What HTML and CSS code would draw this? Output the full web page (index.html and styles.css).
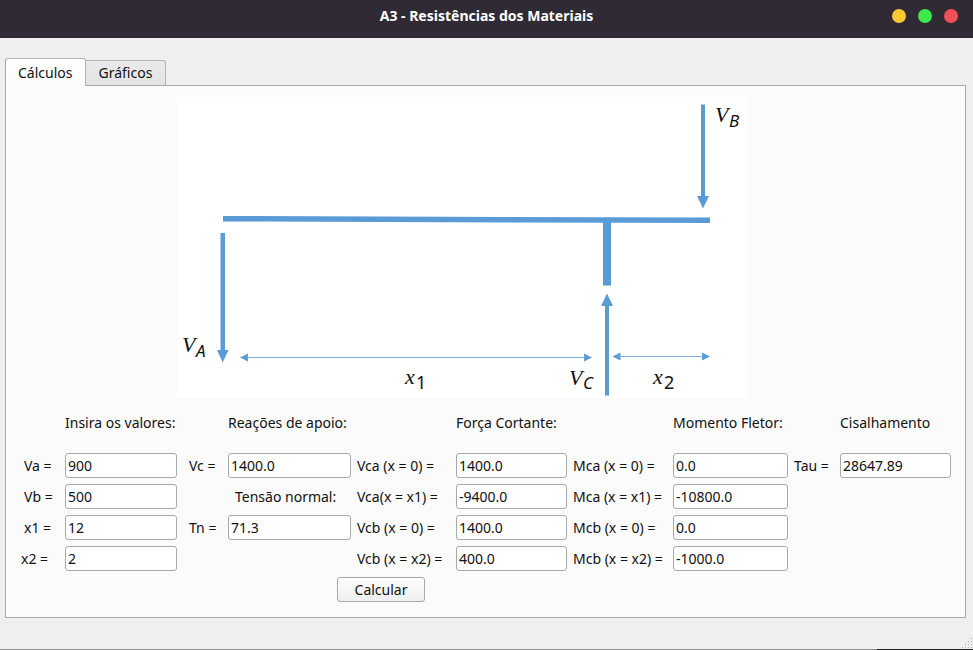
FILE: index.html
```html
<!DOCTYPE html>
<html lang="pt-BR">
<head>
<meta charset="utf-8">
<title>A3 - Resistências dos Materiais</title>
<link rel="stylesheet" href="styles.css">
</head>
<body>
<header class="titlebar">
  <h1 class="title">A3 - Resistências dos Materiais</h1>
  <div class="window-buttons">
    <button type="button" class="dot dot-min" aria-label="Minimizar"></button>
    <button type="button" class="dot dot-max" aria-label="Maximizar"></button>
    <button type="button" class="dot dot-close" aria-label="Fechar"></button>
  </div>
</header>
<main class="content">
  <div class="tabs" role="tablist">
    <button type="button" class="tab tab-active" role="tab" aria-selected="true">Cálculos</button>
    <button type="button" class="tab" role="tab" aria-selected="false">Gráficos</button>
  </div>
  <section class="panel">
    <div class="figure">
      <svg class="beam" viewBox="0 0 571 301" role="img" aria-label="Diagrama da viga">
        <rect width="571" height="301" fill="#fff"/>
        <g fill="#5b9bd5">
          <path d="M46 119L533 120.500V126L46 124.500Z"/>
          <rect x="426" y="122" width="8" height="66.500"/>
          <path d="M43.500 136H48V253H51.500L45.700 265.500L40 253H43.500Z"/>
          <path d="M524 7.500H528V99H532L526 111.500L520 99H524Z"/>
          <path d="M428 298.500H432V209H436L430 196.500L424 209H428Z"/>
          <path d="M63 260.500L71 256.500V264.500Z"/>
          <path d="M415 260.500L407 256.500V264.500Z"/>
          <path d="M435.500 259.500L443.500 255.500V263.500Z"/>
          <path d="M533 259.500L525 255.500V263.500Z"/>
        </g>
        <path d="M70 260.500H408M442 259.500H526" stroke="#7fb0dd" fill="none"/>
        <g class="math">
          <text x="5" y="255">V</text><text class="sub" x="19" y="260">A</text>
          <text x="538" y="25">V</text><text class="sub" x="552" y="30">B</text>
          <text x="392" y="288">V</text><text class="sub" x="406" y="292">C</text>
          <text x="228" y="287">x</text><text class="sub-digit" x="239" y="292">1</text>
          <text x="476" y="287">x</text><text class="sub-digit" x="487" y="292">2</text>
        </g>
      </svg>
    </div>
    <form class="form">
      <h2 class="heading c2">Insira os valores:</h2>
      <h2 class="heading c4">Reações de apoio:</h2>
      <h2 class="heading c6">Força Cortante:</h2>
      <h2 class="heading c8">Momento Fletor:</h2>
      <h2 class="heading c10">Cisalhamento</h2>

      <label class="c1 indent" for="va">Va =</label><input class="c2" id="va" value="900">
      <label class="c3 indent" for="vc">Vc =</label><input class="c4" id="vc" value="1400.0">
      <label class="c5" for="vca0">Vca (x = 0) =</label><input class="c6" id="vca0" value="1400.0">
      <label class="c7" for="mca0">Mca (x = 0) =</label><input class="c8" id="mca0" value="0.0">
      <label class="c9" for="tau">Tau =</label><input class="c10" id="tau" value="28647.89">

      <label class="c1 indent" for="vb">Vb =</label><input class="c2" id="vb" value="500">
      <h2 class="c4 subheading">Tensão normal:</h2>
      <label class="c5" for="vca1">Vca(x = x1) =</label><input class="c6" id="vca1" value="-9400.0">
      <label class="c7" for="mca1">Mca (x = x1) =</label><input class="c8" id="mca1" value="-10800.0">

      <label class="c1 indent" for="x1">x1 =</label><input class="c2" id="x1" value="12">
      <label class="c3 indent" for="tn">Tn =</label><input class="c4" id="tn" value="71.3">
      <label class="c5" for="vcb0">Vcb (x = 0) =</label><input class="c6" id="vcb0" value="1400.0">
      <label class="c7" for="mcb0">Mcb (x = 0) =</label><input class="c8" id="mcb0" value="0.0">

      <label class="c1 indent-small" for="x2">x2 =</label><input class="c2" id="x2" value="2">
      <label class="c5" for="vcb2">Vcb (x = x2) =</label><input class="c6" id="vcb2" value="400.0">
      <label class="c7" for="mcb2">Mcb (x = x2) =</label><input class="c8" id="mcb2" value="-1000.0">

      <div class="actions"><button type="button" class="submit">Calcular</button></div>
    </form>
  </section>
</main>
<footer class="statusbar">
  <svg class="grip" width="12" height="12" viewBox="0 0 12 12" aria-hidden="true">
    <path d="M10 1h1v1h-1zM7 4h1v1h-1zM10 4h1v1h-1zM4 7h1v1h-1zM7 7h1v1h-1zM10 7h1v1h-1zM1 10h1v1h-1zM4 10h1v1h-1zM7 10h1v1h-1zM10 10h1v1h-1z" fill="#a8a8a8"/>
  </svg>
</footer>
</body>
</html>
```
FILE: styles.css
```css
* { box-sizing: border-box; }

body {
  margin: 0;
  min-height: 100vh;
  display: flex;
  flex-direction: column;
  background: #efefef;
  color: #111;
  font: 14px/20px "Noto Sans", "Open Sans", sans-serif;
}

h1, h2 { margin: 0; font-size: inherit; font-weight: normal; }
button, input { font: inherit; color: inherit; margin: 0; }

.titlebar {
  display: grid;
  grid-template-columns: 1fr auto 1fr;
  align-items: center;
  height: 38px;
  padding: 0 15px 6px;
  background: #302a35;
  color: #fff;
}
.title { grid-column: 2; font-size: 14px; font-weight: bold; }
.window-buttons { display: flex; justify-content: flex-end; gap: 12px; }
.dot { width: 14px; height: 14px; padding: 0; border: 0; border-radius: 50%; }
.dot-min { background: #fcc735; }
.dot-max { background: #3ce84b; }
.dot-close { background: #f25056; }

.content {
  flex: 1;
  display: flex;
  flex-direction: column;
  padding: 20px 7px 0 5px;
}
.tabs { display: flex; align-items: flex-end; }
.tab {
  height: 25px;
  padding: 0 13px 0 12px;
  border: 1px solid #b4b4b4;
  border-left: 0;
  border-bottom: 0;
  border-radius: 0 3px 0 0;
  background: linear-gradient(#e9e9e9, #e4e4e4);
}
.tab-active {
  position: relative;
  height: 28px;
  margin-bottom: -1px;
  border-left: 1px solid #a9a9a9;
  border-radius: 3px 3px 0 0;
  background: linear-gradient(#fff, #fbfbfb);
}

.panel {
  flex: 1;
  padding: 11px 14px 15px 12px;
  border: 1px solid #a9a9a9;
  background: #fbfbfb;
}
.figure { display: flex; justify-content: center; padding-right: 44px; }
.beam { display: block; width: 100%; max-width: 571px; }
.math { font: italic 22px "Liberation Serif", serif; fill: #111; }
.math .sub { font: italic 17px "Noto Sans", sans-serif; }
.math .sub-digit { font: 18px "Noto Sans", sans-serif; }

.form {
  display: grid;
  grid-template-columns:
    41px minmax(0, 112fr) 39px minmax(0, 123fr) 93px
    minmax(0, 111fr) 94px minmax(0, 115fr) 40px minmax(0, 111fr);
  grid-template-rows: 49px repeat(5, 25px);
  gap: 6px;
  align-items: center;
  white-space: nowrap;
}
.c1 { grid-column: 1; }
.c2 { grid-column: 2; }
.c3 { grid-column: 3; }
.c4 { grid-column: 4; }
.c5 { grid-column: 5; }
.c6 { grid-column: 6; }
.c7 { grid-column: 7; }
.c8 { grid-column: 8; }
.c9 { grid-column: 9; }
.c10 { grid-column: 10; }
.indent { padding-left: 6px; }
.indent-small { padding-left: 3px; }
.subheading { padding-left: 7px; }

.form input {
  width: 100%;
  height: 25px;
  padding: 0 2px;
  border: 1px solid #a9a9a9;
  border-radius: 3px;
  background: #fff;
}
.actions {
  grid-column: 3 / span 4;
  display: flex;
  justify-content: center;
  padding-left: 12px;
}
.submit {
  height: 25px;
  padding: 0 17px;
  border: 1px solid #a9a9a9;
  border-radius: 3px;
  background: linear-gradient(#fefefe, #eee);
}

.statusbar {
  display: flex;
  justify-content: flex-end;
  align-items: flex-end;
  height: 32px;
  border-bottom: 1px solid;
  border-image: linear-gradient(to right, #929292 90%, #222 90%) 1;
}
.grip { display: block; }
```
